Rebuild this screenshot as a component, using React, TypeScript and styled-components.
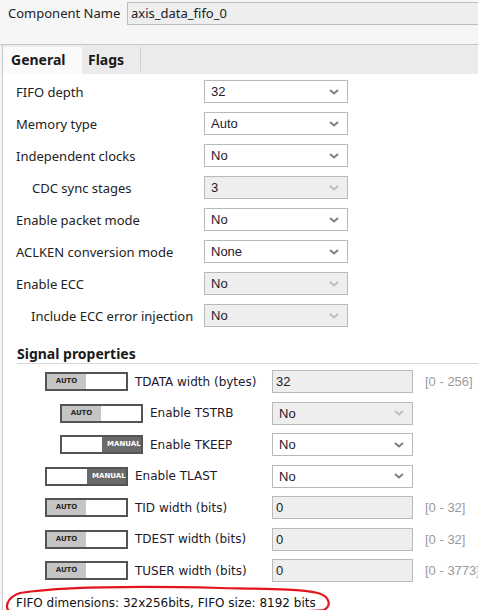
import React from "react";
import styled, { createGlobalStyle } from "styled-components";

const Global = createGlobalStyle`
  html, body { margin: 0; padding: 0; background: #ffffff; }
  body { width: 478px; height: 610px; overflow: hidden; }
`;

const Page = styled.div`
  width: 478px;
  height: 610px;
  overflow: hidden;
  background: #f6f6f6;
  font-family: "Noto Sans", sans-serif;
  color: #222;
`;

const Header = styled.div`
  display: flex;
  align-items: center;
  height: 23px;
  padding: 2px 0 0 8px;
`;

const HeaderLabel = styled.div`
  width: 119px;
  flex: none;
  font-size: 13px;
  line-height: 23px;
`;

const NameInput = styled.div`
  flex: none;
  width: 370px;
  height: 23px;
  box-sizing: border-box;
  border: 1px solid #bdbdbd;
  background: #eeeeee;
  padding-left: 3px;
  font-size: 13px;
  line-height: 21px;
`;

const Spacer = styled.div`
  height: 19px;
  border-bottom: 1px solid #c6c6c6;
`;

const Panel = styled.div`
  margin-left: 2px;
  border-left: 1px solid #c8c8c8;
  background: #ffffff;
  height: 600px;
`;

const TabBar = styled.div`
  display: flex;
  height: 29px;
  box-sizing: border-box;
  padding-top: 2px;
  background: #ebebeb;
`;

const Tab = styled.div<{ $active?: boolean; $w: number; $pl: number }>`
  width: ${(p) => p.$w}px;
  box-sizing: border-box;
  padding-left: ${(p) => p.$pl}px;
  font-weight: 700;
  font-size: 14px;
  line-height: 25px;
  background: ${(p) => (p.$active ? "#fafafa" : "transparent")};
  border-right: ${(p) => (p.$active ? "none" : "1px solid #cfcfcf")};
  height: ${(p) => (p.$active ? 27 : 24)}px;
  color: #1a1a1a;
`;

const Content = styled.div`
  display: flex;
  flex-direction: column;
  padding: 6px 0 0 13px;
`;

const Row = styled.div`
  display: grid;
  grid-template-columns: 188px 144px;
  align-items: center;
  height: 23px;
  margin-bottom: 9px;
`;

const Label = styled.div<{ $indent?: number }>`
  padding-left: ${(p) => p.$indent ?? 0}px;
  font-size: 13px;
  white-space: nowrap;
`;

const SelectBox = styled.div<{ $disabled?: boolean; $w: number }>`
  width: ${(p) => p.$w}px;
  height: 23px;
  box-sizing: border-box;
  border: 1px solid #b9b9b9;
  background: ${(p) => (p.$disabled ? "#eeeeee" : "#ffffff")};
  display: flex;
  align-items: center;
  justify-content: space-between;
  padding: 0 8px 0 6px;
  font-family: "Liberation Sans", Arial, sans-serif;
  font-size: 13px;
  color: #1e1a2a;
  svg { display: block; }
`;

const Field = styled.div`
  width: 141px;
  height: 23px;
  box-sizing: border-box;
  border: 1px solid #b9b9b9;
  background: #eeeeee;
  padding-left: 3px;
  font-family: "Liberation Sans", Arial, sans-serif;
  font-size: 13px;
  line-height: 21px;
  color: #1e1a2a;
`;

const Heading = styled.div`
  margin: 9px 0 6px 1px;
  height: 18px;
  border-bottom: 1px solid #d6d6d6;
  font-weight: 700;
  font-size: 14px;
  line-height: 18px;
  color: #1a1a1a;
`;

const SignalRow = styled.div`
  display: grid;
  grid-template-columns: 227px 141px auto;
  align-items: center;
  height: 23px;
  margin-bottom: 8.5px;
  padding-left: 29px;
`;

const SignalCell = styled.div<{ $indent?: number }>`
  display: flex;
  align-items: center;
  gap: 7px;
  padding-left: ${(p) => p.$indent ?? 0}px;
  font-family: "DejaVu Sans", sans-serif;
  font-size: 12px;
  white-space: nowrap;
  color: #221a2c;
`;

const Toggle = styled.div`
  width: 83px;
  height: 19px;
  box-sizing: border-box;
  border: 2px solid #545454;
  display: flex;
  flex: none;
  overflow: hidden;
  background: #ffffff;
`;

const ToggleHalf = styled.div<{ $kind: "auto" | "manual" | "blank" }>`
  width: ${(p) => (p.$kind === "blank" ? 40 : 39)}px;
  flex: none;
  height: 100%;
  overflow: hidden;
  background: ${(p) =>
    p.$kind === "auto" ? "#c5c5c5" : p.$kind === "manual" ? "#6a6a6a" : "#ffffff"};
  color: ${(p) => (p.$kind === "manual" ? "#ffffff" : "#2a2a2a")};
  font-family: "DejaVu Sans", sans-serif;
  font-weight: 700;
  font-size: 7px;
  line-height: 15px;
  text-align: ${(p) => (p.$kind === "auto" ? "center" : "left")};
  padding-left: ${(p) => (p.$kind === "manual" ? 5 : 0)}px;
  box-sizing: border-box;
  white-space: nowrap;
`;

const Range = styled.div`
  padding-left: 12px;
  font-family: "Liberation Sans", Arial, sans-serif;
  font-size: 13px;
  color: #9a9a9a;
  white-space: nowrap;
`;

const Footer = styled.div`
  position: relative;
  margin-top: 5.5px;
  font-family: "DejaVu Sans", sans-serif;
  font-size: 12px;
  line-height: 14px;
  color: #111;
  white-space: nowrap;
`;

const Scribble = styled.svg`
  position: absolute;
  left: -16px;
  top: -10px;
  overflow: visible;
  pointer-events: none;
`;

const Chevron = ({ disabled }: { disabled?: boolean }) => (
  <svg width="10" height="6" viewBox="0 0 10 6">
    <polyline
      points="1,1 5,4.5 9,1"
      fill="none"
      stroke={disabled ? "#bdbdbd" : "#7a7a7a"}
      strokeWidth="1.8"
    />
  </svg>
);

const Select = ({ value, disabled, w = 144 }: { value: string; disabled?: boolean; w?: number }) => (
  <SelectBox $disabled={disabled} $w={w}>
    <span>{value}</span>
    <Chevron disabled={disabled} />
  </SelectBox>
);

const ModeToggle = ({ mode }: { mode: "auto" | "manual" }) => (
  <Toggle>
    {mode === "auto" ? (
      <>
        <ToggleHalf $kind="auto">AUTO</ToggleHalf>
        <ToggleHalf $kind="blank" />
      </>
    ) : (
      <>
        <ToggleHalf $kind="blank" />
        <ToggleHalf $kind="manual">MANUAL</ToggleHalf>
      </>
    )}
  </Toggle>
);

const general = [
  { label: "FIFO depth", value: "32" },
  { label: "Memory type", value: "Auto" },
  { label: "Independent clocks", value: "No" },
  { label: "CDC sync stages", value: "3", indent: 16, disabled: true },
  { label: "Enable packet mode", value: "No" },
  { label: "ACLKEN conversion mode", value: "None" },
  { label: "Enable ECC", value: "No", disabled: true },
  { label: "Include ECC error injection", value: "No", indent: 15, disabled: true },
];

type Sig = {
  label: string;
  mode: "auto" | "manual";
  indent?: number;
  kind: "field" | "select";
  value: string;
  disabled?: boolean;
  range?: string;
};

const signals: Sig[] = [
  { label: "TDATA width (bytes)", mode: "auto", kind: "field", value: "32", range: "[0 - 256]" },
  { label: "Enable TSTRB", mode: "auto", indent: 15, kind: "select", value: "No", disabled: true },
  { label: "Enable TKEEP", mode: "manual", indent: 15, kind: "select", value: "No" },
  { label: "Enable TLAST", mode: "manual", kind: "select", value: "No" },
  { label: "TID width (bits)", mode: "auto", kind: "field", value: "0", range: "[0 - 32]" },
  { label: "TDEST width (bits)", mode: "auto", kind: "field", value: "0", range: "[0 - 32]" },
  { label: "TUSER width (bits)", mode: "auto", kind: "field", value: "0", range: "[0 - 3773]" },
];

export default function App() {
  return (
    <Page>
      <Global />
      <Header>
        <HeaderLabel>Component Name</HeaderLabel>
        <NameInput>axis_data_fifo_0</NameInput>
      </Header>
      <Spacer />
      <Panel>
        <TabBar>
          <Tab $active $w={79} $pl={8}>General</Tab>
          <Tab $w={59} $pl={6}>Flags</Tab>
        </TabBar>
        <Content>
          {general.map((g) => (
            <Row key={g.label}>
              <Label $indent={g.indent}>{g.label}</Label>
              <Select value={g.value} disabled={g.disabled} />
            </Row>
          ))}
          <Heading>Signal properties</Heading>
          {signals.map((s) => (
            <SignalRow key={s.label}>
              <SignalCell $indent={s.indent}>
                <ModeToggle mode={s.mode} />
                <span>{s.label}</span>
              </SignalCell>
              {s.kind === "field" ? (
                <Field>{s.value}</Field>
              ) : (
                <Select value={s.value} disabled={s.disabled} w={141} />
              )}
              {s.range ? <Range>{s.range}</Range> : <span />}
            </SignalRow>
          ))}
          <Footer>
            FIFO dimensions: 32x256bits, FIFO size: 8192 bits
            <Scribble width="340" height="30" viewBox="0 0 340 30">
              <path
                d="M 11 27 C 4 22, 6 12, 20 7 C 60 1, 140 0, 220 2 C 270 3, 300 3, 318 7 C 331 11, 331 20, 324 24 C 300 27, 200 27, 100 27 C 50 27, 20 28, 11 27 Z"
                fill="none"
                stroke="#e3161c"
                strokeWidth="2.2"
                strokeLinecap="round"
              />
            </Scribble>
          </Footer>
        </Content>
      </Panel>
    </Page>
  );
}
